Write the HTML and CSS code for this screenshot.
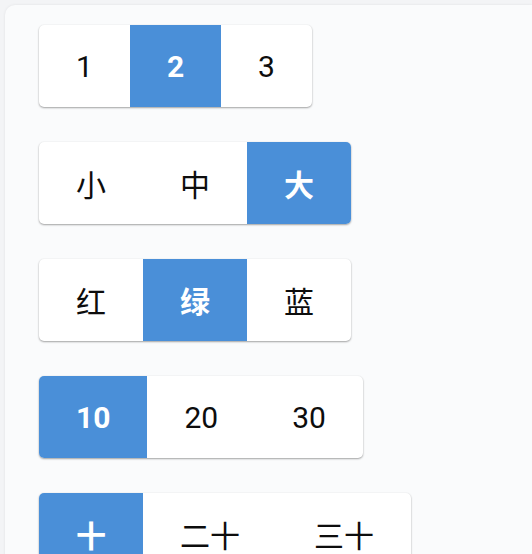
FILE: index.html
```html
<!DOCTYPE html>
<html lang="zh">
<head>
<meta charset="utf-8">
<link rel="stylesheet" href="styles.css">
</head>
<body>
<div class="card">
  <div class="group">
    <div class="seg">1</div>
    <div class="seg on">2</div>
    <div class="seg">3</div>
  </div>
  <div class="group">
    <div class="seg">小</div>
    <div class="seg">中</div>
    <div class="seg on">大</div>
  </div>
  <div class="group">
    <div class="seg">红</div>
    <div class="seg on">绿</div>
    <div class="seg">蓝</div>
  </div>
  <div class="group">
    <div class="seg on">10</div>
    <div class="seg">20</div>
    <div class="seg">30</div>
  </div>
  <div class="group">
    <div class="seg on">十</div>
    <div class="seg">二十</div>
    <div class="seg">三十</div>
  </div>
</div>
</body>
</html>
```
FILE: styles.css
```css
html, body {
  margin: 0;
  padding: 0;
  background: #f3f4f6;
  height: 100%;
  overflow: hidden;
}
body {
  padding: 5px 0 0 5px;
  box-sizing: border-box;
  font-family: Roboto, "Noto Sans CJK SC", sans-serif;
}
.card {
  background: #fafbfc;
  border-radius: 10px 0 0 0;
  box-shadow: 0 0 3px rgba(0, 0, 0, 0.08);
  height: 100%;
  padding: 20px 0 0 34px;
  display: flex;
  flex-direction: column;
  align-items: flex-start;
  gap: 35px;
}
.group {
  display: flex;
  background: #fff;
  border-radius: 5px;
  overflow: hidden;
  box-shadow: 0 1px 2px rgba(0, 0, 0, 0.35), 0 0 2px rgba(0, 0, 0, 0.06);
  flex: none;
}
.seg {
  height: 82px;
  padding: 0 37px;
  display: flex;
  align-items: center;
  justify-content: center;
  font-size: 30px;
  font-weight: 400;
  color: #0d0d0d;
}
.seg.on {
  background: #4a8fd8;
  color: #fff;
  font-weight: 700;
}
```
